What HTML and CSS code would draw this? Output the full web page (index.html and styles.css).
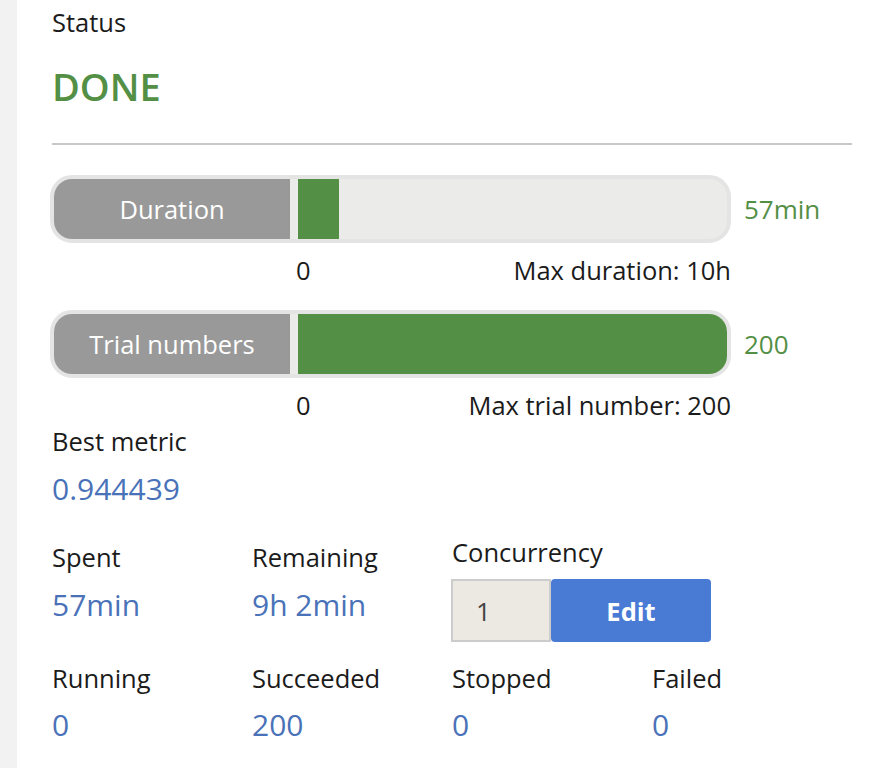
FILE: index.html
```html
<!DOCTYPE html>
<html>
<head>
<meta charset="utf-8">
<link rel="stylesheet" href="styles.css">
</head>
<body>
<div class="page">
  <div class="strip"></div>
  <div class="main">
    <div class="status-label">Status</div>
    <div class="status-value">DONE</div>
    <div class="rule"></div>

    <div class="bar-row bar-row-1">
      <div class="bar">
        <div class="bar-label">Duration</div>
        <div class="bar-track"><div class="bar-fill" style="width:9.5%"></div></div>
      </div>
      <div class="bar-value">57min</div>
    </div>
    <div class="axis"><span>0</span><span>Max duration: 10h</span></div>

    <div class="bar-row bar-row-2">
      <div class="bar">
        <div class="bar-label">Trial numbers</div>
        <div class="bar-track"><div class="bar-fill" style="width:100%"></div></div>
      </div>
      <div class="bar-value">200</div>
    </div>
    <div class="axis"><span>0</span><span>Max trial number: 200</span></div>

    <div class="best">
      <div class="label">Best metric</div>
      <div class="value">0.944439</div>
    </div>

    <div class="grid grid-1">
      <div class="cell">
        <div class="label">Spent</div>
        <div class="value">57min</div>
      </div>
      <div class="cell">
        <div class="label">Remaining</div>
        <div class="value">9h 2min</div>
      </div>
      <div class="cell cell-wide">
        <div class="label label-conc">Concurrency</div>
        <div class="conc">
          <div class="conc-input">1</div>
          <button class="conc-btn">Edit</button>
        </div>
      </div>
    </div>

    <div class="grid grid-2">
      <div class="cell">
        <div class="label">Running</div>
        <div class="value">0</div>
      </div>
      <div class="cell">
        <div class="label">Succeeded</div>
        <div class="value">200</div>
      </div>
      <div class="cell">
        <div class="label">Stopped</div>
        <div class="value">0</div>
      </div>
      <div class="cell">
        <div class="label">Failed</div>
        <div class="value">0</div>
      </div>
    </div>
  </div>
</div>
</body>
</html>
```

FILE: styles.css
```css
html, body {
  margin: 0;
  padding: 0;
  background: #ffffff;
}
body {
  font-family: "Open Sans", "Noto Sans", sans-serif;
  color: #1b1b1b;
}
.page {
  display: flex;
  min-height: 768px;
}
.strip {
  width: 17px;
  flex: none;
  background: #f2f2f2;
}
.main {
  flex: 1;
  padding: 0 27px 0 35px;
}
.status-label {
  font-size: 25.5px;
  line-height: 34px;
  margin-top: 5px;
}
.status-value {
  font-size: 38px;
  font-weight: 600;
  color: #548f46;
  line-height: 50px;
  margin-top: 22px;
}
.rule {
  height: 2px;
  background: #c8c8c8;
  margin-top: 32px;
}
.bar-row {
  display: flex;
  align-items: center;
  margin-left: -2px;
}
.bar-row-1 { margin-top: 30px; }
.bar-row-2 { margin-top: 25px; }
.bar {
  width: 681px;
  height: 68px;
  box-sizing: border-box;
  border: 4px solid #e4e4e4;
  border-radius: 22px;
  background: #ebebea;
  display: flex;
  overflow: hidden;
}
.bar-label {
  width: 236px;
  flex: none;
  background: #999999;
  color: #ffffff;
  font-size: 25.5px;
  display: flex;
  align-items: center;
  justify-content: center;
  margin-right: 8px;
}
.bar-track {
  flex: 1;
  display: flex;
}
.bar-fill {
  background: #548f46;
  height: 100%;
}
.bar-value {
  margin-left: 13px;
  font-size: 26px;
  color: #548f46;
}
.axis {
  width: 681px;
  margin-left: -2px;
  box-sizing: border-box;
  padding-left: 246px;
  display: flex;
  justify-content: space-between;
  font-size: 25.5px;
  line-height: 30px;
  margin-top: 12px;
}
.best {
  margin-top: 4px;
}
.label {
  font-size: 25.5px;
  line-height: 34px;
}
.value {
  font-size: 30px;
  line-height: 40px;
  color: #4a72b8;
  margin-top: 11px;
}
.grid {
  display: grid;
  grid-template-columns: 200px 200px 200px 200px;
  align-items: start;
}
.grid-1 { margin-top: 31px; }
.grid-2 { margin-top: 19px; }
.grid-2 .value { margin-top: 10px; }
.cell-wide {
  grid-column: span 2;
}
.label-conc {
  margin-top: -5px;
}
.conc {
  display: flex;
  margin-top: 10px;
  margin-left: -1px;
}
.conc-input {
  width: 100px;
  height: 63px;
  box-sizing: border-box;
  border: 2px solid #cccccc;
  background: #ebe9e2;
  color: #444444;
  font-size: 26px;
  display: flex;
  align-items: center;
  padding-left: 23px;
}
.conc-btn {
  width: 160px;
  height: 63px;
  border: none;
  border-radius: 4px;
  background: #4a7bd4;
  color: #ffffff;
  font-family: "Open Sans", "Noto Sans", sans-serif;
  font-weight: 700;
  font-size: 25.5px;
  padding: 0;
}
```
